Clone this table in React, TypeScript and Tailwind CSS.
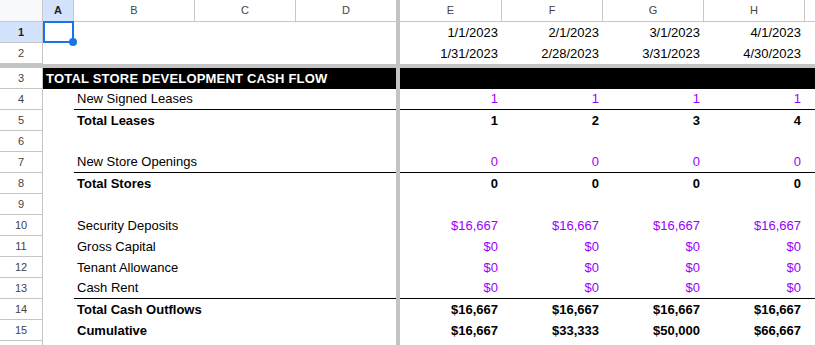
import React from 'react';

type Row = {
  n: number;
  label?: string;
  values?: string[];
  bold?: boolean;
  purple?: boolean;
  line?: boolean;
  section?: boolean;
  hideNum?: boolean;
};

const rows: Row[] = [
  { n: 3, section: true },
  { n: 4, label: 'New Signed Leases', values: ['1', '1', '1', '1'], purple: true, line: true },
  { n: 5, label: 'Total Leases', values: ['1', '2', '3', '4'], bold: true },
  { n: 6 },
  { n: 7, label: 'New Store Openings', values: ['0', '0', '0', '0'], purple: true, line: true },
  { n: 8, label: 'Total Stores', values: ['0', '0', '0', '0'], bold: true },
  { n: 9 },
  { n: 10, label: 'Security Deposits', values: ['$16,667', '$16,667', '$16,667', '$16,667'], purple: true },
  { n: 11, label: 'Gross Capital', values: ['$0', '$0', '$0', '$0'], purple: true },
  { n: 12, label: 'Tenant Allowance', values: ['$0', '$0', '$0', '$0'], purple: true },
  { n: 13, label: 'Cash Rent', values: ['$0', '$0', '$0', '$0'], purple: true, line: true },
  { n: 14, label: 'Total Cash Outflows', values: ['$16,667', '$16,667', '$16,667', '$16,667'], bold: true },
  { n: 15, label: 'Cumulative', values: ['$16,667', '$33,333', '$50,000', '$66,667'], bold: true },
  // row 16 is only a sliver at the bottom edge
  { n: 16, hideNum: true },
];

const valueWidths = ['w-[102px]', 'w-[101px]', 'w-[101px]', 'w-[101px]'];

function RowNum({ n, active = false, hide = false }: { n: number; active?: boolean; hide?: boolean }) {
  return (
    <div
      className={`w-[43px] shrink-0 flex items-center justify-center border-r border-b border-[#c7c7c7] text-[11px] ${
        active ? 'bg-[#d3e3fd] font-bold text-[#1f1f1f]' : 'bg-white text-[#444]'
      }`}
    >
      {hide ? '' : n}
    </div>
  );
}

function Divider() {
  return <div className="w-[4px] shrink-0 bg-[#c4c4c4]" />;
}

function DataRow({ row }: { row: Row }) {
  if (row.section) {
    return (
      <div className="flex h-[21px]">
        <RowNum n={row.n} />
        <div className="w-[353px] shrink-0 bg-black text-white font-bold text-[13px] tracking-[0.2px] flex items-center pl-[3px] whitespace-nowrap">
          TOTAL STORE DEVELOPMENT CASH FLOW
        </div>
        <Divider />
        <div className="flex-1 bg-black" />
      </div>
    );
  }

  const line = row.line ? 'border-b border-black' : '';
  const tone = row.purple ? 'text-[#9900ff]' : 'text-black';

  return (
    <div className="flex h-[21px] text-[13px]">
      <RowNum n={row.n} hide={row.hideNum} />
      <div className="w-[31px] shrink-0" />
      <div className={`w-[322px] shrink-0 flex items-center pl-[3px] whitespace-nowrap ${line} ${row.bold ? 'font-bold' : ''}`}>
        {row.label}
      </div>
      <Divider />
      {valueWidths.map((w, i) => (
        <div
          key={i}
          className={`${w} shrink-0 flex items-center justify-end pr-[4px] ${line} ${tone} ${row.bold ? 'font-bold' : ''}`}
        >
          {row.values ? row.values[i] : ''}
        </div>
      ))}
      <div className={`flex-1 ${line}`} />
    </div>
  );
}

export default function App() {
  return (
    <div className="w-[815px] h-[345px] overflow-hidden bg-white font-[family-name:'Liberation_Sans',Arial,sans-serif] text-black">
      {/* column headers */}
      <div className="flex h-[22px] text-[11px] text-[#444]">
        <div className="w-[43px] shrink-0 bg-[#f8f9fa] border-r border-b border-[#c7c7c7]" />
        <div className="w-[31px] shrink-0 flex items-center justify-center bg-[#d3e3fd] font-bold text-[#1f1f1f] border-r border-b border-[#c7c7c7]">
          A
        </div>
        <div className="w-[121px] shrink-0 flex items-center justify-center border-r border-b border-[#c7c7c7]">B</div>
        <div className="w-[101px] shrink-0 flex items-center justify-center border-r border-b border-[#c7c7c7]">C</div>
        <div className="w-[100px] shrink-0 flex items-center justify-center border-b border-[#c7c7c7]">D</div>
        <Divider />
        <div className="w-[102px] shrink-0 flex items-center justify-center border-r border-b border-[#c7c7c7]">E</div>
        <div className="w-[101px] shrink-0 flex items-center justify-center border-r border-b border-[#c7c7c7]">F</div>
        <div className="w-[101px] shrink-0 flex items-center justify-center border-r border-b border-[#c7c7c7]">G</div>
        <div className="w-[101px] shrink-0 flex items-center justify-center border-r border-b border-[#c7c7c7]">H</div>
        <div className="flex-1 border-b border-[#c7c7c7]" />
      </div>

      {/* frozen rows 1-2 */}
      {[
        ['1/1/2023', '2/1/2023', '3/1/2023', '4/1/2023'],
        ['1/31/2023', '2/28/2023', '3/31/2023', '4/30/2023'],
      ].map((dates, r) => (
        <div key={r} className="flex h-[21px] text-[13px]">
          <RowNum n={r + 1} active={r === 0} />
          <div className="w-[31px] shrink-0 relative">
            {r === 0 && (
              <div className="absolute -top-[1px] left-0 w-[31px] h-[22px] border-2 border-[#1a73e8] z-10">
                <div className="absolute -right-[5px] -bottom-[5px] w-[8px] h-[8px] rounded-full bg-[#1a73e8]" />
              </div>
            )}
          </div>
          <div className="w-[322px] shrink-0" />
          <Divider />
          {dates.map((d, i) => (
            <div key={i} className={`${valueWidths[i]} shrink-0 flex items-center justify-end pr-[4px]`}>
              {d}
            </div>
          ))}
          <div className="flex-1" />
        </div>
      ))}

      <div className="h-[4px] bg-[#c4c4c4]" />

      {rows.map((row) => (
        <DataRow key={row.n} row={row} />
      ))}
    </div>
  );
}
